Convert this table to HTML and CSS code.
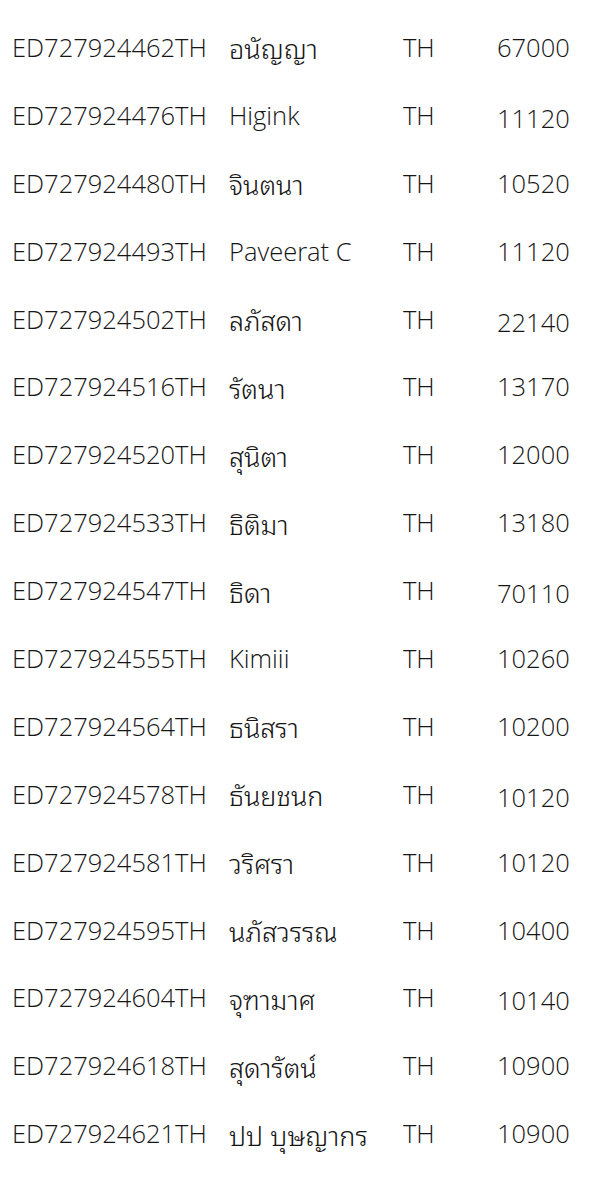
FILE: index.html
```html
<!DOCTYPE html>
<html>
	<head>
		<meta charset="UTF-8">
		<title>ED list</title>
		<link rel="stylesheet" href="styles.css">
	</head>
	<body>
		<div class="list">
			<div class="row"><span class="code">ED727924462TH</span><span class="name">อนัญญา</span><span class="cc">TH</span><span class="zip">67000</span></div>
			<div class="row"><span class="code">ED727924476TH</span><span class="name latin">Higink</span><span class="cc">TH</span><span class="zip low">11120</span></div>
			<div class="row"><span class="code">ED727924480TH</span><span class="name">จินตนา</span><span class="cc">TH</span><span class="zip">10520</span></div>
			<div class="row"><span class="code">ED727924493TH</span><span class="name latin">Paveerat C</span><span class="cc">TH</span><span class="zip">11120</span></div>
			<div class="row"><span class="code">ED727924502TH</span><span class="name">ลภัสดา</span><span class="cc">TH</span><span class="zip low">22140</span></div>
			<div class="row"><span class="code">ED727924516TH</span><span class="name">รัตนา</span><span class="cc">TH</span><span class="zip">13170</span></div>
			<div class="row"><span class="code">ED727924520TH</span><span class="name">สุนิตา</span><span class="cc">TH</span><span class="zip">12000</span></div>
			<div class="row"><span class="code">ED727924533TH</span><span class="name">ธิติมา</span><span class="cc">TH</span><span class="zip">13180</span></div>
			<div class="row"><span class="code">ED727924547TH</span><span class="name">ธิดา</span><span class="cc">TH</span><span class="zip low">70110</span></div>
			<div class="row"><span class="code">ED727924555TH</span><span class="name latin">Kimiii</span><span class="cc">TH</span><span class="zip">10260</span></div>
			<div class="row"><span class="code">ED727924564TH</span><span class="name">ธนิสรา</span><span class="cc">TH</span><span class="zip">10200</span></div>
			<div class="row"><span class="code">ED727924578TH</span><span class="name">ธันยชนก</span><span class="cc">TH</span><span class="zip low">10120</span></div>
			<div class="row"><span class="code">ED727924581TH</span><span class="name">วริศรา</span><span class="cc">TH</span><span class="zip">10120</span></div>
			<div class="row"><span class="code">ED727924595TH</span><span class="name">นภัสวรรณ</span><span class="cc">TH</span><span class="zip">10400</span></div>
			<div class="row"><span class="code">ED727924604TH</span><span class="name">จุฑามาศ</span><span class="cc">TH</span><span class="zip low">10140</span></div>
			<div class="row"><span class="code">ED727924618TH</span><span class="name">สุดารัตน์</span><span class="cc">TH</span><span class="zip">10900</span></div>
			<div class="row"><span class="code">ED727924621TH</span><span class="name">ปป บุษญากร</span><span class="cc">TH</span><span class="zip">10900</span></div>
		</div>
	</body>
</html>
```
FILE: styles.css
```css
*{
	margin: 0;
	padding: 0;
}
body{
	background: #fff;
	color: #161616;
	font-family: "Open Sans", "Noto Sans", sans-serif;
	font-size: 25.5px;
	font-weight: 350;
}
.list{
	padding: 13px 0 0 12px;
}
.row{
	display: grid;
	grid-template-columns: 217px 174px 94px 1fr;
	align-items: center;
	height: 67.9px;
	white-space: nowrap;
}
.name{
	font-family: "Open Sans", "Noto Sans Thai Looped", "Noto Sans Thai", "Loma", "Garuda", sans-serif;
	font-size: 27px;
	font-weight: 350;
}
.name.latin{
	font-size: 25.5px;
}
.zip.low{
	padding-top: 6px;
}
```
